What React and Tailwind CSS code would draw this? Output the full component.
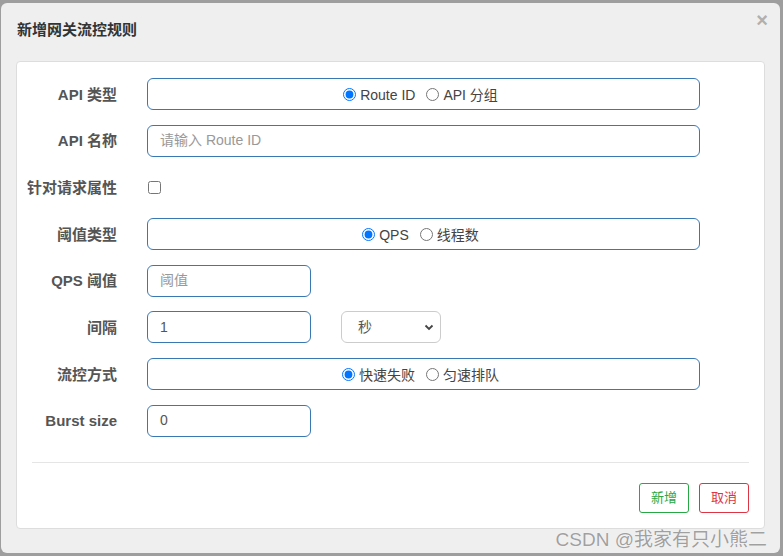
import React from "react";

const font = { fontFamily: '"Liberation Sans", Arial, "Noto Sans CJK SC", sans-serif' };

function Label({ children }) {
  return (
    <div className="w-[100px] shrink-0 text-right text-[15px] font-bold text-[#555] leading-none">
      {children}
    </div>
  );
}

function Radio({ checked, label }) {
  return (
    <label className="flex items-center gap-[4px] text-[14px] text-[#444]">
      <input type="radio" defaultChecked={checked} className="m-0 h-[13px] w-[13px] accent-[#0075ff]" />
      <span className="pt-[2px]">{label}</span>
    </label>
  );
}

function RadioBox({ items }) {
  return (
    <div className="flex h-[32px] w-[553px] items-center justify-center gap-[11px] rounded-[6px] border border-[#3a78b4] bg-white pr-[6px]">
      {items.map((it, i) => (
        <Radio key={i} checked={i === 0} label={it} />
      ))}
    </div>
  );
}

function TextBox({ w, value, placeholder }) {
  return (
    <div className={`flex h-[32px] ${w} items-center rounded-[6px] border border-[#3a78b4] bg-white px-[12px] text-[14px]`}>
      {value ? <span className="text-[#555]">{value}</span> : <span className="text-[#999]">{placeholder}</span>}
    </div>
  );
}

function Row({ label, children }) {
  return (
    <div className="flex h-[32px] items-center gap-[30px]">
      <Label>{label}</Label>
      {children}
    </div>
  );
}

export default function App() {
  return (
    <div className="h-[556px] w-[783px] bg-[#9e9e9e] pl-[1px] pr-[3px] pt-[3px] pb-[3px]" style={font}>
      <div className="relative h-full w-full rounded-[6px] bg-[#efefef] px-[15px]">
        <div className="flex h-[58px] items-center justify-between pb-[4px]">
          <div className="pl-[1px] text-[15px] font-bold text-[#333]">新增网关流控规则</div>
          <div className="-mt-[20px] mr-[-3px] text-[20px] font-bold leading-none text-[#b0b0b0]">×</div>
        </div>
        <div className="rounded-[4px] border border-[#ddd] bg-white px-[15px] pt-[16px] pb-[15px]">
          <div className="-ml-[15px] flex flex-col gap-[14.7px]">
            <Row label="API 类型">
              <RadioBox items={["Route ID", "API 分组"]} />
            </Row>
            <Row label="API 名称">
              <TextBox w="w-[553px]" placeholder="请输入 Route ID" />
            </Row>
            <Row label="针对请求属性">
              <input type="checkbox" className="m-0 ml-[1px] h-[13px] w-[13px]" />
            </Row>
            <Row label="阈值类型">
              <RadioBox items={["QPS", "线程数"]} />
            </Row>
            <Row label="QPS 阈值">
              <TextBox w="w-[164px]" placeholder="阈值" />
            </Row>
            <Row label="间隔">
              <TextBox w="w-[164px]" value="1" />
              <div className="ml-[0px] flex h-[32px] w-[100px] items-center justify-between rounded-[6px] border border-[#ccc] bg-white pl-[16px] pr-[6px] text-[14px] text-[#555]">
                <span>秒</span>
                <svg width="10" height="10" viewBox="0 0 10 10">
                  <path d="M1.5 3.5 L5 7 L8.5 3.5" fill="none" stroke="#444" strokeWidth="1.8" />
                </svg>
              </div>
            </Row>
            <Row label="流控方式">
              <RadioBox items={["快速失败", "匀速排队"]} />
            </Row>
            <Row label="Burst size">
              <TextBox w="w-[164px]" value="0" />
            </Row>
          </div>
          <div className="mt-[25px] border-t border-[#e5e5e5]" />
          <div className="mt-[20px] flex justify-end gap-[10px]">
            <button className="h-[30px] w-[50px] rounded-[3px] border border-[#28a745] bg-white text-[13px] text-[#28a745]">新增</button>
            <button className="h-[30px] w-[50px] rounded-[3px] border border-[#dc3545] bg-white text-[13px] text-[#dc3545]">取消</button>
          </div>
        </div>
        <div
          className="absolute bottom-[4px] right-[13px] text-[19px] leading-none text-[#a0a0a0]"
          style={{ textShadow: "0 0 1px #fff, 0 0 1px #fff" }}
        >
          CSDN @我家有只小熊二
        </div>
      </div>
    </div>
  );
}
